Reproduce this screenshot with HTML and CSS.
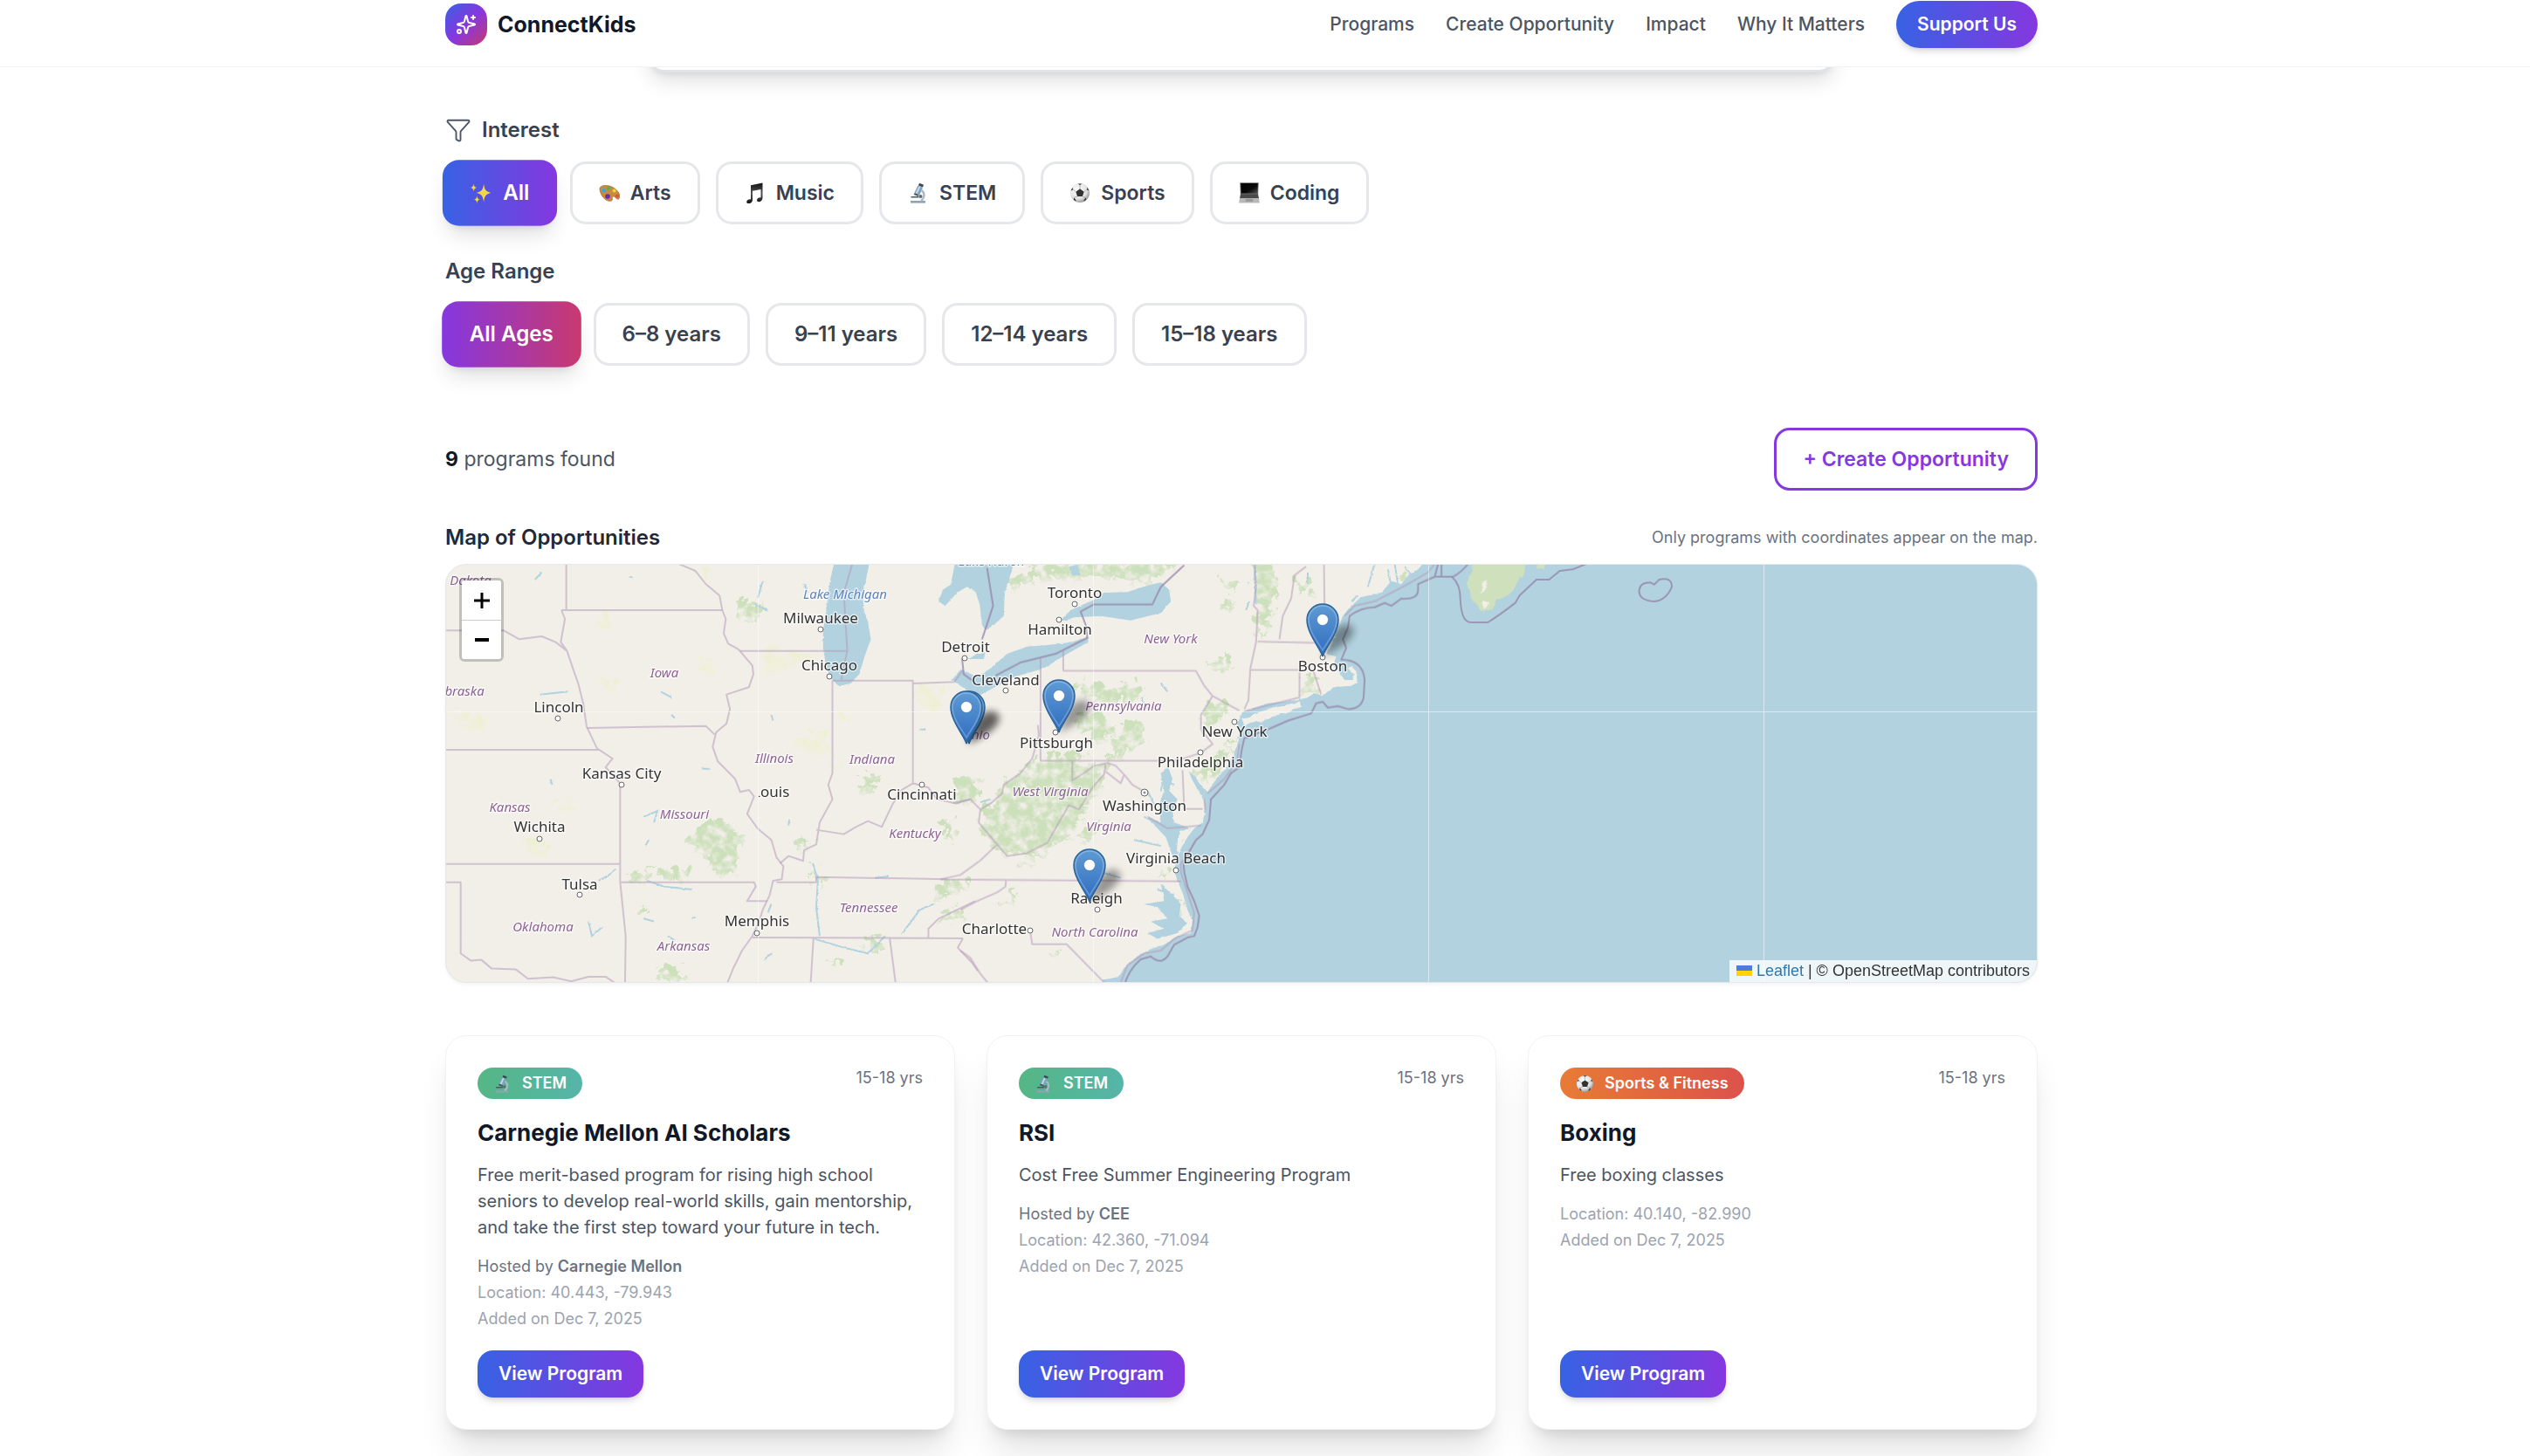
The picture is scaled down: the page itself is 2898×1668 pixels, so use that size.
FILE: index.html
```html
<!DOCTYPE html>
<html lang="en">
<head>
<meta charset="utf-8">
<meta name="viewport" content="width=device-width, initial-scale=1">
<title>ConnectKids</title>
<link rel="stylesheet" href="styles.css">
</head>
<body>

<svg class="defs" aria-hidden="true">
  <defs>
    <linearGradient id="pin-fill" x1="0" y1="0" x2="0" y2="1"><stop offset="0" stop-color="#5f9bd3"/><stop offset="1" stop-color="#2f6cc0"/></linearGradient>
    <linearGradient id="screen" x1="0" y1="0" x2="1" y2="1"><stop offset="0" stop-color="#000"/><stop offset=".6" stop-color="#0a0a0a"/><stop offset="1" stop-color="#555"/></linearGradient>
    <linearGradient id="note" x1="0" y1="0" x2="0" y2="1"><stop offset="0" stop-color="#111"/><stop offset=".5" stop-color="#555"/><stop offset="1" stop-color="#111"/></linearGradient>
    <radialGradient id="ball" cx=".4" cy=".35" r=".7"><stop offset="0" stop-color="#fff"/><stop offset=".65" stop-color="#e2e2e2"/><stop offset="1" stop-color="#8b8b8b"/></radialGradient>
    <filter id="soft" x="-50%" y="-50%" width="200%" height="200%"><feGaussianBlur stdDeviation="4"/></filter>
    <filter id="rough" x="-5%" y="-5%" width="110%" height="110%">
      <feTurbulence type="fractalNoise" baseFrequency=".09" numOctaves="5" seed="4" result="n"/>
      <feDisplacementMap in="SourceGraphic" in2="n" scale="30" xChannelSelector="R" yChannelSelector="G" result="d"/>
      <feColorMatrix in="n" type="matrix" values="0 0 0 0 0  0 0 0 0 0  0 0 0 0 0  0 3 0 0 -.75" result="m"/>
      <feComposite in="d" in2="m" operator="in"/>
    </filter>
    <filter id="coast" x="-2%" y="-2%" width="104%" height="104%">
      <feTurbulence type="fractalNoise" baseFrequency=".09" numOctaves="3" seed="9" result="n"/>
      <feDisplacementMap in="SourceGraphic" in2="n" scale="7" xChannelSelector="R" yChannelSelector="G"/>
    </filter>
    <clipPath id="tile"><rect x="358" y="240" width="100" height="50"/></clipPath>
  </defs>
  <symbol id="sparkles" viewBox="0 0 24 24">
    <path fill="#f7d548" d="M15 2c.7 6 2 8.500 8 10-6 1.200-7.300 4-8 10-.8-6-2-8.800-8-10 6-1.500 7.300-4 8-10zM4 2c.3 2.600 1 3.700 3.400 4.200C5 6.800 4.300 7.800 4 10.400 3.700 7.800 3 6.800.6 6.200 3 5.700 3.700 4.600 4 2zM7.600 15c.3 2.600 1 3.700 3.400 4.200-2.400.6-3.100 1.600-3.400 4.200-.3-2.600-1-3.600-3.400-4.200 2.400-.5 3.100-1.600 3.400-4.200z"/>
  </symbol>
  <symbol id="palette" viewBox="0 0 24 24">
    <path fill="#c98b3f" stroke="#9a6528" stroke-width=".7" d="M1 8C.5 4.500 5 3 9.500 3.600 16 4.300 22 9 23.600 14c1 4-1 6-3 4.800-2-1.400-2.600-3.200-4.600-2.800-1.800.5-.2 2.300-.6 3.800-.8 2.300-5 1.800-8-.3C3.500 16.700 1.500 12 1 8z"/>
    <circle cx="5.800" cy="9.300" r="2.300" fill="#35a9e0"/><circle cx="11" cy="6.600" r="2.100" fill="#4cb548"/><circle cx="17.600" cy="9.600" r="2" fill="#f2d437"/><circle cx="10" cy="16" r="2.800" fill="#6a2bb5"/><circle cx="21" cy="15.400" r="1.900" fill="#e0503f"/>
  </symbol>
  <symbol id="music" viewBox="0 0 24 24">
    <path fill="url(#note)" d="M7 3.200 20.500.5v17c0 5-6.500 6.200-6.500 2.800 0-2.400 2.500-3.300 4.500-3V8L9 9.800V20c0 4.500-6.800 5.600-6.800 2.300 0-2.300 2.600-3.400 4.800-3.100z"/>
  </symbol>
  <symbol id="microscope" viewBox="0 0 24 24">
    <path fill="#8aa4b8" d="M3 21h17v2.600H3z"/><path fill="#3c4750" d="M13 .8l5 2-1 2.700-5-2z"/>
    <path fill="#7fa3bf" d="M11.400 3.600 17 5.800l-3.600 8.400-6-2.400z"/><path fill="#c7dbe8" d="M12.500 4.500l1.800.7-3.500 7.600-1.900-.8z"/>
    <path fill="#4b5963" d="M7.600 12l5 2-.8 1.900-5-2zM3.500 16h9v1.600h-9z"/>
    <path fill="none" stroke="#a9bac6" stroke-width="2.400" d="M15.500 9c4.500 3 3.500 9-.5 12"/><circle cx="14.500" cy="16" r="2" fill="#5b6b77"/>
  </symbol>
  <symbol id="soccer" viewBox="0 0 24 24">
    <circle cx="12" cy="12" r="11" fill="url(#ball)"/>
    <path fill="#333" d="M12 7.300l4.700 3.400-1.800 5.400H9.100l-1.800-5.400zM9.500 1.400h5L12 3zM1.600 9.500l1.800-3.400.9 2.200zM22.400 9.500l-1.800-3.400-.9 2.200zM4.800 19.800l.5-2.600 2.200 3.400-.3.900zM19.200 19.800l-.5-2.600-2.200 3.400.3.900z"/>
    <path fill="none" stroke="#999" stroke-width=".7" d="M12 3v4.300M4.300 8.300l3 2.400M19.700 8.300l-3 2.400M5.300 17.200l3.800-1.100M18.700 17.200l-3.800-1.100"/>
  </symbol>
  <symbol id="laptop" viewBox="0 0 24 24">
    <path fill="#6a6a6a" d="M1.300.3h21.400l-.6 14H1.900z"/><path fill="url(#screen)" d="M2.200 1h19.600l-.5 11.500H2.700z"/>
    <path fill="#4a4a4a" d="M2 13.500h20l1 4.500H1z"/><path fill="#b8b8b8" d="M1 18h22l.8 5.500H.2z"/><path fill="#999" d="M8 18.800h8l.4 3.200H7.600z"/>
  </symbol>
  <symbol id="pin" viewBox="0 0 80 64" overflow="visible">
    <path fill="#000" opacity=".38" filter="url(#soft)" d="M19 61 28 38C34 24 50 20 54 29 57 40 38 52 19 61z"/>
    <path fill="url(#pin-fill)" stroke="#2c6498" stroke-width="1.500" d="M19 61C17 53 1 35 1 19A18 18 0 0 1 37 19C37 35 21 53 19 61z"/>
    <path fill="none" stroke="#fff" stroke-opacity=".25" stroke-width="1.500" d="M19 54C15 46 3 33 3 19A16 16 0 0 1 35 19C35 33 23 46 19 54z"/>
    <circle cx="19" cy="19" r="6.500" fill="#fff" stroke="#2c6498" stroke-opacity=".5"/>
  </symbol>
</svg>

<header class="site-header">
  <div class="container header-row">
    <a class="brand" href="#">
      <span class="brand-mark">
        <svg width="24" height="24" viewBox="0 0 24 24" fill="none" stroke="#fff" stroke-width="2" stroke-linecap="round" stroke-linejoin="round"><path d="M9.937 15.500A2 2 0 0 0 8.500 14.063l-6.135-1.582a.5.5 0 0 1 0-.962L8.500 9.936A2 2 0 0 0 9.937 8.500l1.582-6.135a.5.5 0 0 1 .963 0L14.063 8.500A2 2 0 0 0 15.500 9.937l6.135 1.581a.5.5 0 0 1 0 .964L15.500 14.063a2 2 0 0 0-1.437 1.437l-1.582 6.135a.5.5 0 0 1-.963 0z"/><path d="M20 2v4M22 4h-4"/><circle cx="4" cy="20" r="2"/></svg>
      </span>
      ConnectKids
    </a>
    <nav class="nav">
      <a href="#">Programs</a>
      <a href="#">Create Opportunity</a>
      <a href="#">Impact</a>
      <a href="#">Why It Matters</a>
      <a class="support" href="#">Support Us</a>
    </nav>
  </div>
</header>

<main class="page">
  <div class="container">
    <div class="search"></div>

    <section class="filters">
      <div class="filter">
        <h2 class="label">
          <svg width="30" height="30" viewBox="0 0 24 24" fill="none" stroke="#4b5563" stroke-width="1.500" stroke-linecap="round" stroke-linejoin="round"><path d="M10 20a1 1 0 0 0 .553.895l2 1A1 1 0 0 0 14 21v-7a2 2 0 0 1 .517-1.341L21.740 4.670A1 1 0 0 0 21 3H3a1 1 0 0 0-.742 1.670l7.225 7.989A2 2 0 0 1 10 14z"/></svg>
          Interest
        </h2>
        <div class="chips chips-interest">
          <button class="chip chip-all" type="button"><svg class="emoji"><use href="#sparkles"/></svg>All</button>
          <button class="chip" type="button"><svg class="emoji"><use href="#palette"/></svg>Arts</button>
          <button class="chip" type="button"><svg class="emoji"><use href="#music"/></svg>Music</button>
          <button class="chip" type="button"><svg class="emoji"><use href="#microscope"/></svg>STEM</button>
          <button class="chip" type="button"><svg class="emoji"><use href="#soccer"/></svg>Sports</button>
          <button class="chip" type="button"><svg class="emoji"><use href="#laptop"/></svg>Coding</button>
        </div>
      </div>
      <div class="filter">
        <h2 class="label">Age Range</h2>
        <div class="chips">
          <button class="chip chip-ages" type="button">All Ages</button>
          <button class="chip" type="button">6–8 years</button>
          <button class="chip" type="button">9–11 years</button>
          <button class="chip" type="button">12–14 years</button>
          <button class="chip" type="button">15–18 years</button>
        </div>
      </div>
    </section>

    <div class="summary">
      <p><strong>9</strong> programs found</p>
      <button class="chip create" type="button">+ Create Opportunity</button>
    </div>

    <section>
      <div class="map-head">
        <h2>Map of Opportunities</h2>
        <p>Only programs with coordinates appear on the map.</p>
      </div>
      <div class="map">
        <svg class="map-art" viewBox="0 0 1822 478" preserveAspectRatio="xMidYMid slice">
          <!-- forests -->
          <g filter="url(#rough)">
            <g class="forest" transform="translate(-11 -8) scale(.3954 .3333)">
              <path d="M730 940 830 900 880 950 870 1090 800 1090 780 1020 730 980zM640 1080 740 1060 730 1110 650 1110zM575 1210 620 1200 610 1230 575 1230zM1450 1230 1530 1200 1520 1240 1450 1255zM1240 1320 1290 1300 1280 1370 1240 1350zM1145 1380 1180 1380 1180 1410 1150 1400zM1230 760 1280 740 1270 810 1230 800zM1505 760 1568 740 1568 830 1505 850zM1090 1060 1110 1080 1120 1140 1095 1110zM1440 1130 1500 1100 1550 1120 1460 1180zM870 150 940 150 930 220 870 210zM1460 940 1500 880 1490 980zM560 1090 630 1060 610 1110 570 1120zM640 1410 710 1420 700 1460 650 1450zM1040 960 1080 990 1040 1010z"/>
            </g>
            <g class="forest" transform="translate(589 -8) scale(.3827 .3333)">
              <path d="M55 900 130 780 200 710 240 690 330 680 400 710 440 700 490 560 560 570 540 640 450 700 430 760 390 840 330 960 260 990 200 1020 130 1020 80 970zM350 420 440 450 520 430 560 470 500 500 420 500 350 460zM880 30 950 30 940 180 900 280 885 180zM790 70 835 80 820 110 790 100zM790 150 820 130 815 180 790 180zM745 370 790 340 820 370 790 400zM1010 80 1060 70 1050 130 1020 130zM730 540 770 480 800 520 730 620zM690 740 800 650 820 620 800 700 740 770zM150 80 230 40 180 20 660 20 560 90 460 70 240 70 150 110zM100 1200 170 1140 160 1180zM340 960 420 900 380 980zM150 1060 260 980 280 1000 170 1070zM600 1080 620 1080 610 1120zM1020 420 1060 400 1080 460 1020 470zM330 560 420 520 470 600 400 640zM635 1180 665 1190 660 1230 640 1220zM270 1350 300 1360 280 1370z"/>
            </g>
            <g class="meadow" transform="translate(-11 -8) scale(.3954 .3333)">
              <path d="M30 520 150 560 140 600 80 590zM470 200 510 210 500 260 470 250zM1040 620 1130 590 1140 680 1060 670zM1380 450 1480 440 1450 540 1390 500zM250 960 330 1000 320 1040 270 1020zM470 420 540 430 530 460 480 455zM340 860 400 820 390 880zM750 60 800 100 780 40zM760 340 810 370 800 410 770 390zM940 320 1100 330 1040 380 940 400zM1160 520 1200 540 1180 570zM1140 690 1180 720 1140 740z"/>
            </g>
          </g>

          <!-- small lakes and rivers -->
          <g class="ponds" filter="url(#coast)" transform="translate(-11 -8) scale(.3954 .3333)">
            <path d="M285 75 305 50M930 140 945 80M1065 90 1075 120M920 160 960 180M650 460 680 480M770 725 790 725M600 890 640 870 630 910M605 990 615 970M610 1110 660 1130 740 1140M470 1110 500 1090 520 1070M330 760 335 780M440 1250 450 1300 480 1270M600 1240 630 1250M670 1300 690 1315M950 1380 970 1360M1090 1050 1105 1110 1100 1200 1110 1300M1350 1290 1400 1210 1440 1190M1095 1310 1180 1340 1250 1360 1300 1300M1400 590 1415 590M975 560 970 540M1020 920 1022 900M560 65 568 68M970 1190 960 1220M740 1240 750 1235M1270 1100 1310 1095M680 540 690 550M300 470 380 460"/>
          </g>
          <g class="ponds" filter="url(#coast)" transform="translate(589 -8) scale(.3827 .3333)">
            <path d="M880 30 885 160M855 180 865 150M640 780 600 760M560 800 590 870M550 890 600 920M620 720 600 800M520 970 600 990M480 1100 420 1080M590 1140 640 1160M360 1050 420 1080M1220 100 1240 20M1290 100 1280 40M1330 30 1350 60M1300 20 1310 90M1190 130 1170 150M60 840 90 830M540 480 560 520M600 430 620 460M1040 50 1040 90"/>
          </g>

          <!-- open water -->
          <g class="water" filter="url(#coast)" transform="translate(589 -8) scale(.3827 .3333)">
            <path d="M1400 0 1370 40 1340 60 1320 90 1290 80 1260 120 1200 135 1165 170 1145 200 1130 240 1115 290 1095 330 1125 340 1115 370 1135 395 1150 420 1175 420 1178 400 1160 380 1170 372 1185 390 1188 430 1165 440 1120 445 1100 460 1085 475 1060 465 1040 480 1015 488 920 500 880 515 845 530 828 570 835 600 830 640 815 690 790 730 760 770 740 805 725 785 700 750 683 733 695 765 715 805 730 835 733 870 725 910 700 930 680 960 660 1000 650 1030 640 1075 650 1110 665 1150 680 1210 695 1250 690 1290 650 1300 610 1330 570 1345 530 1370 490 1410 475 1440 430 1450 400 1500 3300 1500 3300 0z"/>
            <path d="M600 740 622 720 635 760 625 800 650 830 635 870 640 910 690 930 670 960 655 1010 640 1040 615 960 590 930 560 890 600 910 595 850 610 800z"/>
            <path d="M600 1120 640 1165 660 1190 655 1230 680 1255 650 1290 590 1310 560 1290 610 1275 570 1250 620 1240 590 1200 550 1190 610 1180z"/>
            <path d="M-13 0-28 90-52 110-65 150-45 165-10 120 20 100 45 115 58 160 65 230 75 248 100 230 130 200 133 120 150 60 165 0z"/>
            <path d="M-25 420 0 385 15 390 50 410 90 380 140 330 200 305 260 300 330 290 385 272 380 292 320 330 250 380 160 410 110 440 60 472 20 455zM25 348 50 330 75 325 70 348z"/>
            <path d="M300 215 330 180 400 145 430 120 500 118 560 95 600 85 625 110 630 150 600 190 510 215 420 200 340 205 315 215zM325 30 350 25 360 60 335 60z"/>
          </g>
          <g class="water" filter="url(#coast)" transform="translate(-11 -8) scale(.3954 .3333)">
            <path d="M1155 0 1140 80 1130 170 1120 250 1120 310 1130 380 1145 420 1165 440 1200 432 1225 400 1240 340 1258 280 1250 220 1235 170 1240 100 1257 0z"/>
          </g>

          <!-- islands and peninsulas -->
          <g filter="url(#coast)">
            <path class="land" transform="translate(589 -8) scale(.3827 .3333)" d="M842 552 900 528 980 505 1015 493 1022 512 960 540 900 560 850 575zM655 940 690 925 665 985 650 1015zM1345 25 1372 20 1360 40z"/>
            <g transform="translate(1089 -8) scale(.4847 .3333)">
              <path class="isle" d="M190 0 170 60 170 110 180 150 205 188 225 172 240 145 265 130 285 90 300 60 310 0zM325 0 355 0 350 40 330 38zM5 60 20 45 25 65 10 80z"/>
              <path class="land" d="M205 75 215 70 210 110 195 120zM200 150 220 155 208 180z"/>
            </g>
          </g>

          <!-- state lines -->
          <g class="border" transform="translate(-11 -8) scale(.3954 .3333)">
            <path d="M376 0V180M362 180H828M362 180 372 210 360 290 378 320 395 380 410 430 425 500 435 580 465 655 510 690 490 720 532 775V1115L548 1300 546 1480M28 250H195L240 280 305 270 345 290 378 320M28 660H470M28 1052H532M28 1115H70V1360L100 1385 130 1382 160 1412 230 1415 265 1447 340 1442 390 1456 440 1440 490 1440 515 1460M532 1115H920L925 1130 900 1180H958"/>
            <path d="M700 20 750 45 780 90 820 130 828 180 838 210 832 260 845 295 875 315 915 370 918 400 905 445 840 470 850 520 840 570 810 600 800 650 815 700 865 760 880 805 905 798 920 820 900 880 930 930 970 970 985 1030 1005 1060 1000 1105 975 1110 965 1160 945 1210 935 1250 915 1300 885 1350 860 1410 840 1470"/>
            <path d="M880 320H1188M1205 20 1180 120 1190 320 1172 422M1147 422H1380V780M436 585 780 578 806 608M1147 422V740L1135 780 1147 830 1110 910 1100 985 1065 1005 1062 1042 1020 1025 995 1050M1100 935 1180 950 1215 925 1250 905 1290 925 1320 850 1345 800 1380 775 1425 790 1450 830 1505 845 1545 830M1380 432 1500 427 1525 385M985 1115H1100V1097L1480 1105M915 1305 1525 1308M1092 1308 1083 1480M1313 1308 1332 1480M1425 1308V1275L1455 1240 1500 1215 1560 1180M1525 1308 1510 1340 1550 1390 1568 1420"/>
          </g>
          <g class="border" transform="translate(589 -8) scale(.3827 .3333)">
            <path d="M-60 1105 660 1112M-60 1105 0 1090 60 1040 110 985M0 1210 50 1180 110 1150 135 1130 137 1105M240 345V697H650M308 320V388H705L730 440 755 475 720 540 720 590 755 640 720 670 650 697M755 475 835 525M232 575 235 610 215 690 180 740 130 780 125 810 95 840 60 865 30 830-20 842M60 865 55 910 110 985 140 1025 200 1015 260 980 300 900 325 850 355 865 395 790 430 745 435 710M435 735 480 775 490 745 465 715 440 705 400 715 370 740 335 765V697M490 745 515 780 545 800M665 730 670 863H725M210 1290 215 1328H318L435 1465M0 1350 30 1375 60 1430 85 1465"/>
            <path d="M880 0 885 100 878 165 890 180 885 290 868 380 862 490 850 520M850 528 1015 480V385H868M890 288 1060 292M1055 385 1080 470M1035 30 1000 60 990 140 965 200 955 280M1088 0 1090 170M560 890 620 930 720 920M730 830 733 870M690 1000 660 1050 660 1080 680 1150 700 1220 695 1280 640 1310 600 1350 550 1360 500 1400 480 1460M835 640 828 700 790 760 740 810M1150 200 1180 165 1240 150 1290 120 1340 90 1400 50 1420 20"/>
            <path class="coastal" d="M490 1475Q500 1420 540 1380L570 1370Q600 1400 620 1370L640 1330 680 1305 700 1300 710 1270 715 1230 700 1180 680 1130 670 1080 668 1050 685 1010 705 970 725 950 745 900 750 830 790 780 810 740 835 720 842 660 850 620 920 590 980 560 1050 535 1065 500 1085 495 1100 515 1130 510 1160 520Q1200 520 1207 480L1210 420Q1205 350 1140 350L1155 310 1145 280 1160 240 1165 200Q1200 170 1240 170L1270 155 1290 165 1320 140Q1370 145 1370 110L1370 90 1420 65 1475 65M1420 65 1430 20M1440 65V20M1475 65Q1500 50 1520 20"/>
            <path class="coastal" d="M670 25 600 100 575 160H400L360 185 375 230 380 275 285 330 180 360 105 405M80 35 98 165 65 280M5 345 10 400 40 425"/>
          </g>
          <g class="border" transform="translate(1089 -8) scale(.4847 .3333)">
            <path class="coastal" d="M130 65Q150 90 150 140 152 222 175 222H215Q240 200 280 155L290 130 330 75H360L385 45 415 40 450 20M600 85 608 92 620 75Q650 65 650 100 635 150 605 150 570 145 573 110 575 85 600 85z"/>
          </g>

          <path class="seams" d="M357.500 0V478M741.500 0V478M1125.500 0V478M1509.500 0V478M0 168.500H1822"/>

          <g class="towns">
            <circle cx="429" cy="74" r="3"/><circle cx="439" cy="128" r="3"/><circle cx="128" cy="176" r="3"/><circle cx="201" cy="252" r="3"/><circle cx="545" cy="252" r="3"/><circle cx="107" cy="314" r="3"/><circle cx="153" cy="378" r="3"/><circle cx="356" cy="422" r="3"/><circle cx="720" cy="45" r="3"/><circle cx="702" cy="63" r="3"/><circle cx="594" cy="107" r="3"/><circle cx="641" cy="144" r="3"/><circle cx="1004" cy="106" r="3"/><circle cx="698" cy="192" r="3"/><circle cx="903" cy="180" r="3"/><circle cx="864" cy="215" r="3"/><circle cx="836" cy="350" r="3"/><circle cx="746" cy="395" r="3"/><circle cx="669" cy="419" r="3"/><circle cx="800" cy="261" r="4"/><circle cx="800" cy="261" r="1"/>
          </g>

          <g class="state">
            <text x="250" y="129">Iowa</text><text x="376" y="227">Illinois</text><text x="488" y="228">Indiana</text><text x="73" y="283">Kansas</text><text x="273" y="291">Missouri</text><text x="537" y="313">Kentucky</text><text x="484" y="398">Tennessee</text><text x="111" y="420">Oklahoma</text><text x="272" y="442">Arkansas</text><text x="830" y="90">New York</text><text x="776" y="167">Pennsylvania</text><text x="692" y="265">West Virginia</text><text x="759" y="305">Virginia</text><text x="743" y="426">North Carolina</text><text x="607" y="200">Ohio</text><text x="28" y="23">Dakota</text><text x="12" y="150">Nebraska</text>
          </g>
          <g class="lake"><text x="457" y="39">Lake Michigan</text><text x="625" y="1">Lake Huron</text></g>
          <g class="city">
            <text x="429" y="67">Milwaukee</text><text x="439" y="121">Chicago</text><text x="129" y="169">Lincoln</text><text x="201" y="245">Kansas City</text><text x="360" y="266" clip-path="url(#tile)">St. Louis</text><text x="545" y="269">Cincinnati</text><text x="107" y="306">Wichita</text><text x="153" y="372">Tulsa</text><text x="356" y="414">Memphis</text><text x="720" y="38">Toronto</text><text x="703" y="80">Hamilton</text><text x="595" y="100">Detroit</text><text x="641" y="138">Cleveland</text><text x="1004" y="122">Boston</text><text x="699" y="210">Pittsburgh</text><text x="903" y="197">New York</text><text x="864" y="232">Philadelphia</text><text x="800" y="282">Washington</text><text x="836" y="342">Virginia Beach</text><text x="745" y="388">Raleigh</text><text x="628" y="423">Charlotte</text>
          </g>

          <g>
            <use href="#pin" x="985" y="44" width="80" height="64"/>
            <use href="#pin" x="683" y="131" width="80" height="64"/>
            <use href="#pin" x="580" y="144" width="80" height="64"/>
            <use href="#pin" x="577" y="144" width="80" height="64"/>
            <use href="#pin" x="718" y="325" width="80" height="64"/>
          </g>
        </svg>
        <div class="zoom">
          <button type="button" aria-label="Zoom in"><svg width="18" height="18"><path d="M0 9h18M9 0v18" stroke="#000" stroke-width="3"/></svg></button>
          <button type="button" aria-label="Zoom out"><svg width="18" height="18"><path d="M1 9h16" stroke="#000" stroke-width="4"/></svg></button>
        </div>
        <div class="credit"><svg width="18" height="12"><path fill="#4c7be1" d="M0 0h18v6H0z"/><path fill="#ffd500" d="M0 6h18v6H0z"/></svg> <a href="#">Leaflet</a> | © OpenStreetMap contributors</div>
      </div>
    </section>

    <section class="cards">
      <article class="card">
        <div class="card-top"><span class="badge"><svg class="emoji-small"><use href="#microscope"/></svg>STEM</span><span class="ages">15-18 yrs</span></div>
        <h3>Carnegie Mellon AI Scholars</h3>
        <p class="about">Free merit-based program for rising high school seniors to develop real-world skills, gain mentorship, and take the first step toward your future in tech.</p>
        <div class="meta"><p class="host">Hosted by <strong>Carnegie Mellon</strong></p><p>Location: 40.443, -79.943</p><p>Added on Dec 7, 2025</p></div>
        <a class="view" href="#">View Program</a>
      </article>
      <article class="card">
        <div class="card-top"><span class="badge"><svg class="emoji-small"><use href="#microscope"/></svg>STEM</span><span class="ages">15-18 yrs</span></div>
        <h3>RSI</h3>
        <p class="about">Cost Free Summer Engineering Program</p>
        <div class="meta"><p class="host">Hosted by <strong>CEE</strong></p><p>Location: 42.360, -71.094</p><p>Added on Dec 7, 2025</p></div>
        <a class="view" href="#">View Program</a>
      </article>
      <article class="card">
        <div class="card-top"><span class="badge badge-sports"><svg class="emoji-small"><use href="#soccer"/></svg>Sports &amp; Fitness</span><span class="ages">15-18 yrs</span></div>
        <h3>Boxing</h3>
        <p class="about">Free boxing classes</p>
        <div class="meta"><p>Location: 40.140, -82.990</p><p>Added on Dec 7, 2025</p></div>
        <a class="view" href="#">View Program</a>
      </article>
    </section>
  </div>
</main>
</body>
</html>
```
FILE: styles.css
```css
* { box-sizing: border-box; margin: 0; }
body {
  font-family: Inter, "Liberation Sans", sans-serif;
  font-size: 24px;
  line-height: 36px;
  color: #374151;
  background: #fff;
}
a { color: inherit; text-decoration: none; }
button { font: inherit; color: inherit; cursor: pointer; }
h2, h3 { font-size: 24px; font-weight: 600; }
.defs { position: absolute; width: 0; height: 0; }

/* the right gutter is kept free beside the centred column */
.site-header, .page { padding-right: 54px; }
.container { width: min(100% - 96px, 1824px); margin: 0 auto; }

.site-header {
  position: sticky;
  top: 0;
  z-index: 10;
  padding-top: 1px;
  padding-bottom: 21px;
  background: rgba(255, 255, 255, .98);
  border-bottom: 1px solid #f1f2f4;
}
.header-row { display: flex; align-items: center; justify-content: space-between; }
.brand { display: flex; align-items: center; gap: 12px; font-size: 25px; font-weight: 700; color: #111827; }
.brand-mark {
  display: grid;
  place-items: center;
  width: 48px;
  height: 48px;
  border-radius: 18px;
  background: linear-gradient(135deg, #3762e3, #8537e0 50%, #c9396f);
}
.nav { display: flex; align-items: center; gap: 36px; font-size: 21px; font-weight: 500; color: #4b5563; }
.support, .view {
  padding: 12px 24px;
  font-size: 21px;
  line-height: 30px;
  font-weight: 600;
  color: #fff;
  background: linear-gradient(90deg, #3762e3, #8537e0);
  box-shadow: 0 6px 9px -2px rgba(0, 0, 0, .12), 0 3px 6px -3px rgba(0, 0, 0, .12);
}
.support { border-radius: 27px; }

.search {
  max-width: 1368px;
  height: 42px;
  margin: -36px auto 0;
  border: 3px solid #e1e4e7;
  border-top: 0;
  border-radius: 0 0 24px 24px;
  background: #fff;
  box-shadow: 0 15px 23px -5px rgba(0, 0, 0, .12), 0 6px 9px -6px rgba(0, 0, 0, .12);
}

.filters { display: flex; flex-direction: column; gap: 36px; margin-top: 48px; }
.filter { display: flex; flex-direction: column; gap: 18px; }
.label { display: flex; align-items: center; gap: 12px; }
.chips { display: flex; flex-wrap: wrap; gap: 18px; }
.chip {
  display: flex;
  align-items: center;
  gap: 12px;
  padding: 15px 30px;
  font-weight: 600;
  border: 3px solid #e5e7eb;
  border-radius: 18px;
  background: #fff;
}
.chips-interest .chip, .chip-ages, .create { font-size: 23px; }
.chip-all, .chip-ages {
  padding: 18px 33px;
  color: #fff;
  border: 0;
  transform: scale(1.05);
  box-shadow: 0 15px 23px -5px rgba(0, 0, 0, .12), 0 6px 9px -6px rgba(0, 0, 0, .12);
}
.chip-all { padding: 18px 30px; background: linear-gradient(90deg, #3762e3, #8537e0); }
.chip-ages { padding: 18px 30px; background: linear-gradient(90deg, #8537e0, #c9396f); }
.emoji { width: 24px; height: 24px; }
.emoji-small { width: 21px; height: 21px; }

.summary { display: flex; align-items: center; justify-content: space-between; margin-top: 71px; color: #4b5563; }
.summary p { font-size: 23px; }
.summary strong { font-weight: 700; color: #111827; }
.create { color: #8537e0; border-color: #8537e0; }

.map-head { display: flex; align-items: center; justify-content: space-between; margin: 36px 0 12px; color: #1f2937; }
.map-head p { font-size: 18px; line-height: 24px; color: #6b7280; }
.map {
  position: relative;
  height: 480px;
  overflow: hidden;
  border: 1px solid #e5e7eb;
  border-radius: 24px;
  background: #f2efe9;
  box-shadow: 0 2px 4px rgba(0, 0, 0, .05);
}
.map-art { display: block; width: 100%; height: 100%; }
.map-art path { vector-effect: non-scaling-stroke; }
.water { fill: #b1d2de; }
.land { fill: #f2efe9; }
.isle { fill: #cfe0bd; }
.forest { fill: #cde0bc; }
.meadow { fill: #eef0d5; }
.ponds { fill: none; stroke: #b1d2de; stroke-width: 2; }
.border { fill: none; stroke: #b59bb9; stroke-opacity: .55; stroke-width: 2; stroke-linejoin: round; }
.coastal { stroke: #9787ab; stroke-opacity: .8; stroke-width: 2; }
.seams { fill: none; stroke: #fff; stroke-opacity: .5; stroke-width: 1; }
.towns { fill: #fff; stroke: #666; stroke-width: 1; }
.state, .lake, .city {
  font-family: "Noto Sans", sans-serif;
  font-size: 17px;
  text-anchor: middle;
  fill: #333;
  stroke: #fff;
  stroke-opacity: .6;
  stroke-width: 3;
  stroke-linejoin: round;
  paint-order: stroke;
}
.state, .lake { font-size: 15px; font-style: italic; fill: #8d6394; }
.lake { fill: #5d85bd; }

.zoom {
  position: absolute;
  top: 15px;
  left: 15px;
  overflow: hidden;
  width: 51px;
  border: 3px solid rgba(0, 0, 0, .2);
  border-radius: 6px;
  background-clip: padding-box;
}
.zoom button { display: grid; place-items: center; width: 45px; height: 45px; padding: 0; border: 0; background: #fff; }
.zoom button + button { border-top: 1px solid #ccc; }
.credit {
  position: absolute;
  right: 0;
  bottom: 0;
  padding: 0 8px;
  font-family: "Liberation Sans", Arial, sans-serif;
  font-size: 18px;
  line-height: 25px;
  color: #333;
  background: rgba(255, 255, 255, .8);
}
.credit a { color: #3177a8; }

.cards { display: grid; grid-template-columns: repeat(3, 1fr); gap: 36px; margin: 60px 0 30px; }
.card {
  display: flex;
  flex-direction: column;
  padding: 36px;
  border: 1px solid #f1f2f4;
  border-radius: 24px;
  background: #fff;
  box-shadow: 0 30px 38px -8px rgba(0, 0, 0, .12), 0 12px 15px -9px rgba(0, 0, 0, .12);
}
.card-top { display: flex; align-items: flex-start; justify-content: space-between; font-size: 18px; line-height: 24px; }
.badge {
  display: flex;
  align-items: center;
  gap: 12px;
  padding: 6px 18px;
  font-weight: 600;
  color: #fff;
  border-radius: 18px;
  background: linear-gradient(90deg, #55b685, #55b5a9);
}
.badge-sports { background: linear-gradient(90deg, #e87b35, #dc524b); }
.ages { color: #6b7280; }
.card h3 { margin-top: 18px; font-size: 26px; line-height: 42px; font-weight: 700; color: #111827; }
.about { margin-top: 12px; font-size: 20px; line-height: 30px; color: #4b5563; }
.meta { display: grid; gap: 6px; margin: 18px 0 24px; font-size: 18px; line-height: 24px; color: #9ca3af; }
.host { color: #6b7280; }
.host strong { font-weight: 600; }
.view { align-self: flex-start; margin-top: auto; border-radius: 18px; }
```
